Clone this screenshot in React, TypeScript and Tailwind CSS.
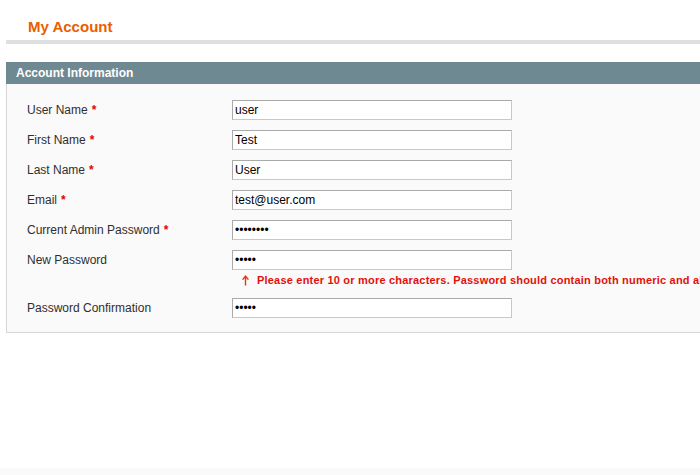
import React from "react";

const fields = [
  { label: "User Name", required: true, value: "user", type: "text" },
  { label: "First Name", required: true, value: "Test", type: "text" },
  { label: "Last Name", required: true, value: "User", type: "text" },
  { label: "Email", required: true, value: "test@user.com", type: "text" },
  { label: "Current Admin Password", required: true, value: "12345678", type: "password" },
  {
    label: "New Password",
    required: false,
    value: "12345",
    type: "password",
    error: "Please enter 10 or more characters. Password should contain both numeric and alphabetic characters.",
  },
  { label: "Password Confirmation", required: false, value: "12345", type: "password" },
];

function UpArrow() {
  return (
    <svg width="7" height="11" viewBox="0 0 7 11" className="absolute left-[2px] top-[2px]">
      <path d="M3.5 1.5 V10.5" stroke="#eb340a" strokeWidth="1.4" fill="none" />
      <path d="M0.6 4.6 L3.5 1.2 L6.4 4.6" stroke="#eb340a" strokeWidth="1.4" fill="none" />
    </svg>
  );
}

export default function App() {
  return (
    <div
      className="w-[700px] h-[475px] overflow-hidden bg-white flex flex-col"
      style={{ fontFamily: "'Liberation Sans', Arial, Helvetica, sans-serif" }}
    >
      <div className="flex-1 pl-[6px]">
        <div className="w-[760px]">
          {/* Content header */}
          <div className="h-[44px] border-b-4 border-[#dfdfdf] pt-[18px]">
            <h3 className="pl-[22px] text-[15px] leading-[18px] font-bold text-[#eb5e00]">My Account</h3>
          </div>

          {/* Entry edit */}
          <div className="mt-[18px]">
            <div className="h-[22px] bg-[#6f8992] px-[10px] flex items-center">
              <h4 className="text-[12px] font-bold text-white leading-[22px]">Account Information</h4>
            </div>
            <div className="bg-[#fafafa] border-l border-b border-[#d6d6d6] pt-[16px] pb-[14px] pl-[20px]">
              <div className="flex flex-col gap-[10px]">
                {fields.map((f) => (
                  <div key={f.label} className="flex">
                    <label className="w-[205px] shrink-0 h-[20px] flex items-center text-[12px] text-[#2f2f2f]">
                      {f.label}
                      {f.required && <span className="ml-[4px] text-[#eb0000] font-bold">*</span>}
                    </label>
                    <div className="flex flex-col">
                      <input
                        type={f.type}
                        value={f.value}
                        readOnly
                        className="w-[280px] h-[20px] bg-white border border-[#aaa] border-r-[#c8c8c8] border-b-[#c8c8c8] px-[2px] text-[12px] text-black outline-none"
                        style={{ fontFamily: "'Liberation Sans', Arial, sans-serif" }}
                      />
                      {f.error && (
                        <div className="relative mt-[3px] h-[15px] ml-[8px] pl-[17px] text-[11px] tracking-[0.2px] leading-[14px] font-bold text-[#e3100b] whitespace-nowrap">
                          <UpArrow />
                          {f.error}
                        </div>
                      )}
                    </div>
                  </div>
                ))}
              </div>
            </div>
          </div>
        </div>
      </div>
      <div className="h-[7px] bg-[#fafafa]" />
    </div>
  );
}
